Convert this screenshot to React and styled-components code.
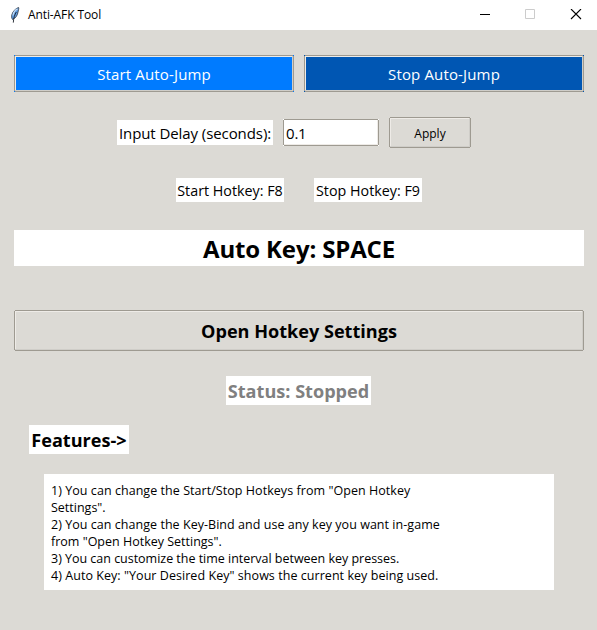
import React from "react";
import styled, { createGlobalStyle, css } from "styled-components";

const GlobalStyle = createGlobalStyle`
  * { box-sizing: border-box; }
  body { margin: 0; background: #dcdad5; }
`;

const strip = (color, pos, size) =>
  `linear-gradient(${color}, ${color}) ${pos} / ${size} no-repeat`;

/* Clam-style bevel: a grey frame with open corners and a light/dark inner edge */
const bevel = (face, light = "#eeebe7", dark = "#cfcdc8") => css`
  background:
    ${strip("#9e9a91", "center top", "calc(100% - 2px) 1px")},
    ${strip("#9e9a91", "center bottom", "calc(100% - 2px) 1px")},
    ${strip("#9e9a91", "left center", "1px calc(100% - 2px)")},
    ${strip("#9e9a91", "right center", "1px calc(100% - 2px)")},
    ${strip(dark, "1px calc(100% - 1px)", "calc(100% - 2px) 1px")},
    ${strip(dark, "calc(100% - 1px) 1px", "1px calc(100% - 2px)")},
    ${strip(light, "1px 1px", "calc(100% - 2px) 1px")},
    ${strip(light, "1px 1px", "1px calc(100% - 2px)")},
    ${face};
`;

const Window = styled.div`
  width: 597px;
  height: 630px;
  display: flex;
  flex-direction: column;
  overflow: hidden;
  background: #dcdad5;
  color: #000;
  font-family: "Open Sans", "Noto Sans", sans-serif;
  white-space: nowrap;
`;

const TitleBar = styled.header`
  height: 30px;
  flex: none;
  display: flex;
  align-items: center;
  padding-left: 8px;
  background: #fff;
`;

const TitleText = styled.h1`
  margin: 0 auto 0 4px;
  font-size: 12px;
  font-weight: 400;
  line-height: 30px;
  letter-spacing: -0.1px;
`;

const Controls = styled.div`
  display: flex;
  gap: 34px;
  padding-right: 15px;

  svg { display: block; }
`;

const Content = styled.main`
  display: flex;
  flex-direction: column;
  padding: 25px 13px 0 14px;
`;

const ActionRow = styled.div`
  display: grid;
  grid-template-columns: 1fr 1fr;
  gap: 10px;
`;

const Button = styled.button`
  appearance: none;
  border: 0;
  padding: 0;
  font-family: inherit;
  color: #000;
  ${bevel("#dcdad5")}
`;

const ActionButton = styled(Button)`
  height: 37px;
  padding-top: 1px;
  color: #fff;
  font-size: 15px;
  letter-spacing: 0.15px;
  ${({ $face }) => bevel($face)}
`;

const DelayRow = styled.form`
  display: flex;
  align-items: center;
  margin: 25px 0 0 103px;
`;

const Label = styled.label`
  width: 156px;
  height: 25px;
  background: #fff;
  text-align: center;
  font-size: 15px;
  line-height: 26px;
  letter-spacing: -0.08px;
`;

const Entry = styled.input`
  width: 96px;
  height: 27px;
  margin: 0 10px;
  padding: 1px 3px;
  border: 0;
  border-radius: 0;
  outline: 0;
  color: #000;
  font: 15px "Open Sans", "Noto Sans", sans-serif;
  letter-spacing: -0.2px;
  ${bevel("#fff", "#fff", "#eeebe7")}
`;

const ApplyButton = styled(Button)`
  width: 82px;
  height: 31px;
  padding-top: 1px;
  font-size: 12px;
`;

const HotkeyRow = styled.div`
  display: flex;
  justify-content: center;
  gap: 30px;
  margin-top: 30px;
`;

const HotkeyLabel = styled.div`
  width: 108px;
  height: 24px;
  background: #fff;
  text-align: center;
  font-size: 14.3px;
  line-height: 25px;
`;

const KeyBanner = styled.div`
  height: 36px;
  margin-top: 28px;
  background: #fff;
  text-align: center;
  font-size: 24px;
  font-weight: 700;
  line-height: 38px;
  letter-spacing: -0.15px;
`;

const SettingsButton = styled(Button)`
  height: 41px;
  margin-top: 44px;
  padding: 1px 0 0;
  font-size: 18.1px;
  font-weight: 700;
`;

const Tag = styled.div`
  width: ${({ $width }) => $width}px;
  height: 29px;
  background: #fff;
  text-align: center;
  font-size: 18.1px;
  font-weight: 700;
  line-height: 30px;
`;

const StatusTag = styled(Tag)`
  margin: 25px 0 0 212px;
  color: #808080;
`;

const FeaturesTag = styled(Tag)`
  margin: 20px 0 0 15px;
`;

const FeatureBox = styled.div`
  width: 510px;
  height: 116px;
  margin: 20px 0 0 30px;
  padding: 8px 7px;
  background: #fff;
`;

const FeatureLine = styled.div`
  font-size: 12.5px;
  line-height: 17px;
  letter-spacing: ${({ $tracking }) => $tracking}px;
`;

const FEATURES = [
  ['1) You can change the Start/Stop Hotkeys from "Open Hotkey', 0.05],
  ['Settings".', 0],
  ["2) You can change the Key-Bind and use any key you want in-game", 0.04],
  ['from "Open Hotkey Settings".', 0],
  ["3) You can customize the time interval between key presses.", -0.02],
  ['4) Auto Key: "Your Desired Key" shows the current key being used.', 0.05],
];

const Feather = () => (
  <svg width="16" height="16" viewBox="0 0 16 16">
    <path d="M10.600.5C7.500 1.500 4.500 4.500 3.700 8.300C3.400 10 3.700 11.400 4.600 12.500C8 11 9.600 8 10 5C10.400 3.500 11 1.700 10.600.5Z" fill="#5f9be0" stroke="#27303c" strokeWidth="0.8" />
    <path d="M9.500 1.900C7 3.200 5.300 5.600 5 8.500" fill="none" stroke="#c4dcf5" strokeWidth="1.200" />
    <path d="M8.300 5C6.700 7.500 5.600 11 5.300 15.600" fill="none" stroke="#1a2029" strokeWidth="0.9" />
  </svg>
);

export default function App() {
  return (
    <>
      <GlobalStyle />
      <Window>
        <TitleBar>
          <Feather />
          <TitleText>Anti-AFK Tool</TitleText>
          <Controls>
            <svg width="12" height="12" viewBox="0 0 12 12">
              <path d="M2 5.500H12" stroke="#000" />
            </svg>
            <svg width="12" height="12" viewBox="0 0 12 12">
              <path d="M1.500 .5H10.500V9.500H1.500Z" fill="none" stroke="#ccc" />
            </svg>
            <svg width="12" height="12" viewBox="0 0 12 12">
              <path d="M1 0L11 10M11 0L1 10" stroke="#000" strokeWidth="1.100" />
            </svg>
          </Controls>
        </TitleBar>
        <Content>
          <ActionRow>
            <ActionButton $face="#007bff">Start Auto-Jump</ActionButton>
            <ActionButton $face="#0056b3">Stop Auto-Jump</ActionButton>
          </ActionRow>
          <DelayRow>
            <Label htmlFor="delay">Input Delay (seconds):</Label>
            <Entry id="delay" defaultValue="0.1" />
            <ApplyButton type="button">Apply</ApplyButton>
          </DelayRow>
          <HotkeyRow>
            <HotkeyLabel>Start Hotkey: F8</HotkeyLabel>
            <HotkeyLabel>Stop Hotkey: F9</HotkeyLabel>
          </HotkeyRow>
          <KeyBanner>Auto Key: SPACE</KeyBanner>
          <SettingsButton>Open Hotkey Settings</SettingsButton>
          <StatusTag $width={145}>Status: Stopped</StatusTag>
          <FeaturesTag $width={100}>Features-&gt;</FeaturesTag>
          <FeatureBox>
            {FEATURES.map(([text, tracking]) => (
              <FeatureLine key={text} $tracking={tracking}>{text}</FeatureLine>
            ))}
          </FeatureBox>
        </Content>
      </Window>
    </>
  );
}
